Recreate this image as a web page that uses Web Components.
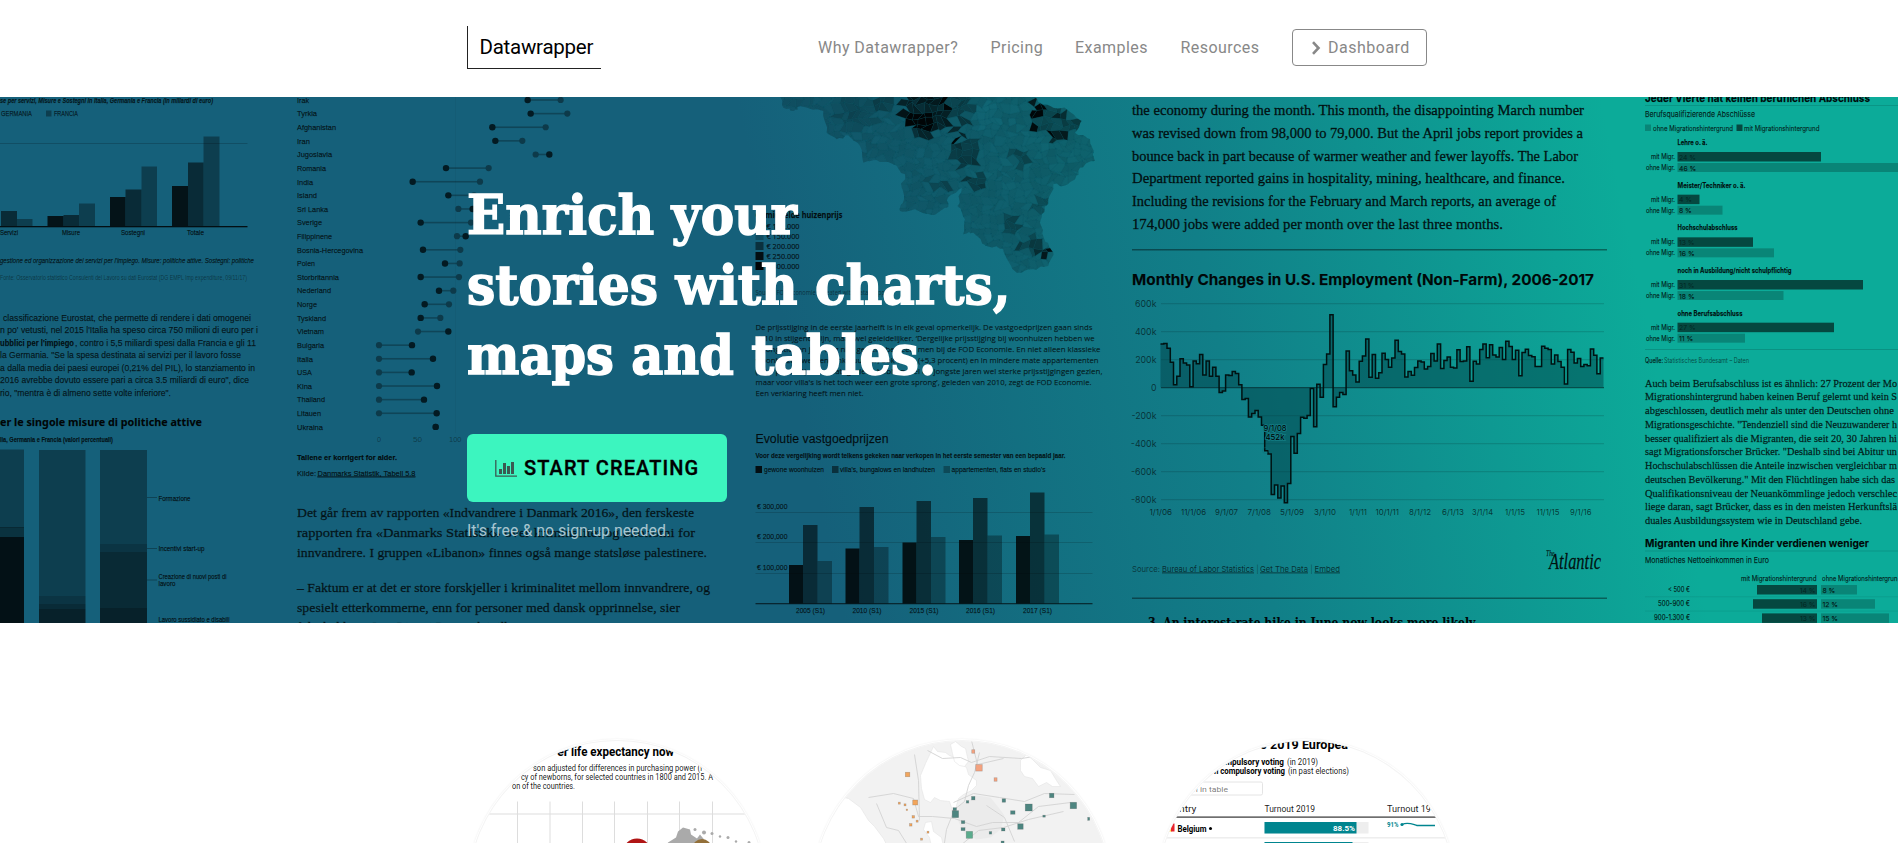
<!DOCTYPE html>
<html lang="en">
<head>
<meta charset="utf-8">
<title>Datawrapper</title>
<style>
html,body{margin:0;background:#fff;overflow:hidden;height:843px}
body{font-family:Roboto,"Liberation Sans",sans-serif;color:#000}
</style>
</head>
<body>
<dw-page>
  <dw-header>
    <dw-logo slot="brand">Datawrapper</dw-logo>
    <dw-nav-link w="140">Why Datawrapper?</dw-nav-link>
    <dw-nav-link w="52">Pricing</dw-nav-link>
    <dw-nav-link w="73">Examples</dw-nav-link>
    <dw-nav-link w="79">Resources</dw-nav-link>
    <dw-nav-button>Dashboard</dw-nav-button>
  </dw-header>
  <dw-hero>
    <dw-backdrop slot="backdrop"></dw-backdrop>
    <fit-line slot="title" w="330">Enrich your</fit-line>
    <fit-line slot="title" w="543">stories with charts,</fit-line>
    <fit-line slot="title" w="469">maps and tables.</fit-line>
    <dw-cta slot="action">START CREATING</dw-cta>
    <fit-line slot="note" w="203">It's free &amp; no sign-up needed.</fit-line>
  </dw-hero>
  <dw-features>
    <dw-bubble kind="chart"></dw-bubble>
    <dw-bubble kind="map"></dw-bubble>
    <dw-bubble kind="table"></dw-bubble>
  </dw-features>
</dw-page>
<script>
class Base extends HTMLElement{
  constructor(){super();this.attachShadow({mode:'open'});}
  connectedCallback(){this.shadowRoot.innerHTML=this.view();this.ready&&this.ready();}
}
customElements.define('dw-page',class extends Base{
  view(){return '<style>:host{display:flex;flex-direction:column;height:843px;overflow:hidden}</style><slot></slot>';}
});
customElements.define('dw-header',class extends Base{
  view(){return `<style>:host{display:block;height:97px;flex:none;background:#fff}
  .in{width:960px;margin:0 auto;height:95px;display:flex;align-items:center;justify-content:space-between;transform:translateX(-2px)}
  nav{display:flex;align-items:center;gap:32.5px}</style>
  <div class="in"><slot name="brand"></slot><nav><slot></slot></nav></div>`;}
});
customElements.define('dw-logo',class extends Base{
  view(){return `<style>:host{display:block;box-sizing:border-box;width:134px;height:43px;border-left:1px solid #222;border-bottom:1px solid #222;padding-left:11.500px;font:400 20.500px/42px Roboto,sans-serif;white-space:nowrap;letter-spacing:-.25px}</style><slot></slot>`;}
});
customElements.define('dw-nav-link',class extends Base{
  view(){return `<style>:host{display:block;width:${this.getAttribute('w')}px;font:400 16px/20px Roboto,sans-serif;letter-spacing:.45px;color:#888;white-space:nowrap;position:relative;left:-1px}</style><slot></slot>`;}
});
customElements.define('dw-nav-button',class extends Base{
  view(){return `<style>:host{display:flex;align-items:center;box-sizing:border-box;width:135px;height:37px;border:1px solid #888;border-radius:4px;padding-left:18px;gap:7px;font:400 16px/20px Roboto,sans-serif;letter-spacing:.5px;color:#888;margin-left:-1px}svg{display:block}</style>
  <svg width="10" height="14" viewBox="0 0 10 14"><path d="M2 1.200 7.500 7 2 12.800" fill="none" stroke="#888" stroke-width="2.600"/></svg><slot></slot>`;}
});
customElements.define('dw-hero',class extends Base{
  view(){return `<style>:host{display:block;position:relative;height:526px;flex:none;overflow:hidden;background:#15607a}
  .bg{position:absolute;inset:0}
  .in{position:relative;width:960px;margin:0 auto;left:-2px;padding-top:83px;box-sizing:border-box;display:flex;flex-direction:column;align-items:flex-start}
  h1{margin:0;font:700 55px/70px "DejaVu Serif",serif;color:#fff;-webkit-text-stroke:1.500px #fff}
  .note{margin-top:18px;font:400 17px/20px Roboto,sans-serif;color:#a9c6d0}
  .act{margin-top:44px}
  </style><div class="bg"><slot name="backdrop"></slot></div>
  <div class="in"><h1><slot name="title"></slot></h1><div class="act"><slot name="action"></slot></div><div class="note"><slot name="note"></slot></div></div>`;}
});
/* One line of text, stretched to a given width. Defined after the hero, whose font it measures with. */
customElements.define('fit-line',class extends Base{
  view(){return '<style>:host{display:block;white-space:nowrap}span{display:inline-block;transform-origin:0 50%}</style><span><slot></slot></span>';}
  ready(){const s=this.shadowRoot.querySelector('span'),w=+this.getAttribute('w');
    s.style.transform='scaleX('+(w/s.offsetWidth)+')';}
});
customElements.define('dw-cta',class extends Base{
  view(){return `<style>:host{display:flex;align-items:center;box-sizing:border-box;width:260px;height:68px;border-radius:6px;background:#3cf5bf;padding-left:28px;gap:7px;font:500 20px/24px Roboto,sans-serif;letter-spacing:1.100px;color:#000;-webkit-text-stroke:.35px #000;white-space:nowrap}svg{display:block;flex:none}</style>
  <svg width="22" height="18" viewBox="0 0 22 18"><path d="M.8 1v16.200H22" fill="none" stroke="#3a5a52" stroke-width="1.300"/><path d="M4 10h3v5H4zM8 4h3v11H8zM12 7h3v8h-3zM16 3h3v12h-3z" fill="#3a5a52"/></svg><slot></slot>`;}
});
customElements.define('dw-features',class extends Base{
  view(){return `<style>:host{display:grid;grid-template-columns:repeat(3,300px);column-gap:44.500px;padding:116px 0 0 467px;flex:none}</style><slot></slot>`;}
});

/* ---------- svg helpers ---------- */
const esc=s=>s.replace(/&/g,'&amp;').replace(/</g,'&lt;');
const F={s:'Liberation Sans, sans-serif',r:'Liberation Serif, serif',o:'Open Sans, sans-serif',n:'Noto Sans, sans-serif',l:'Roboto, sans-serif',i:'Inter, sans-serif',d:'DejaVu Serif, serif'};
function T(x,y,w,size,text,f='s',o=.8,extra=''){
  return `<text x="${x}" y="${y}" font-size="${size}" font-family="${F[f]}" fill-opacity="${o}" ${w?`textLength="${w}" lengthAdjust="spacingAndGlyphs"`:''} ${extra}>${esc(text)}</text>`;}
const R=(x,y,w,h,o,fill='#000')=>`<rect x="${x}" y="${y}" width="${w}" height="${h}" fill="${fill}" fill-opacity="${o}" stroke="none"/>`;
const B='font-weight="700"';

function italian(){
  let s=T(0,102.500,213,7.500,'se per servizi, Misure e Sostegni in Italia, Germania e Francia (in miliardi di euro)','s',.75,B+' font-style="italic"');
  s+=T(1,116,31,7.500,'GERMANIA','s',.7)+R(46,110.500,5.500,6,.35)+T(54,116,24,7.500,'FRANCIA','s',.7);
  s+=R(0,143,247.500,1,.18)+R(0,226,247.500,1.300,.85);
  for(const [x,y,w,o] of [[1,211,16,.55],[17,219,15.500,.35],[47.500,216,16,.8],[63.500,215,15.500,.55],[79,203.500,16,.35],[110,197,15.500,.8],[125.500,189.500,16,.55],[141.500,166.500,15.500,.35],[172,186,16,.8],[188,162.500,15.500,.55],[203.500,136.500,16,.35]])s+=R(x,y,w,226-y,o);
  s+=T(0,235,18,7,'Servizi')+T(62,235,18,7,'Misure')+T(121,235,24,7,'Sostegni')+T(187,235,17,7,'Totale');
  s+=T(0,262.500,254,7.500,'gestione ed organizzazione dei servizi per l\'impiego. Misure: politiche attive. Sostegni: politiche','s',.75,'font-style="italic"');
  s+=T(0,280,247,6.500,'Fonte: Osservatorio statistico Consulenti del Lavoro su dati Eurostat (DG EMPL lmp expenditure, 09/11/17)','s',.45,'stroke="none"');
  s+=T(3,320.500,248,9,'classificazione Eurostat, che permette di rendere i dati omogenei','s',.75)
    +T(0,333,258,9,'n po\' vetusti, nel 2015 l\'Italia ha speso circa 750 milioni di euro per i','s',.75)
    +T(0,345.500,74,9,'ubblici per l\'impiego','s',.85,B)+T(75,345.500,181,9,', contro i 5,5 miliardi spesi dalla Francia e gli 11','s',.75)
    +T(0,358,241,9,'la Germania. "Se la spesa destinata ai servizi per il lavoro fosse','s',.75)
    +T(0,370.500,255,9,'a dalla media dei paesi europei (0,21% del PIL), lo stanziamento in','s',.75)
    +T(0,383,249,9,'2016 avrebbe dovuto essere pari a circa 3.5 miliardi di euro", dice','s',.75)
    +T(0,395.500,171,9,'rio, "mentra è di almeno sette volte inferiore".','s',.75);
  s+=T(0,425.500,202,11,'er le singole misure di politiche attive','n',.95,B);
  s+=T(0,441.500,113,7,'lia, Germania e Francia (valori percentuali)','s',.8,B);
  s+=R(0,449.500,24,78,.35)+R(0,527,24,10,.48)+R(0,537,24,86,.82);
  s+=R(39,450,46.500,146,.35)+R(39,596,46.500,8,.45)+R(39,604,46.500,5,.55)+R(39,609,46.500,14,.65);
  s+=R(100,450,47,94,.35)+R(100,544,47,8,.45)+R(100,552,47,56,.56)+R(100,608,47,15,.65);
  for(const y of [497,548,579.500])s+=R(147,y,10,1,.3);
  s+=T(158.500,500.500,32,6.500,'Formazione')+T(158.500,550.500,46,6.500,'Incentivi start-up')+T(158.500,579,68,6.500,'Creazione di nuovi posti di')+T(158.500,586,17,6.500,'lavoro')+T(158.500,621.500,71,6.500,'Lavoro sussidiato e disabili');
  return s;
}
function norwegian(){
  const rows=[['Irak',12,743,842],['Tyrkia',20,752,862],['Afghanistan',39,637,797],['Iran',13,646,727],['Jugoslavia',35,808,767],['Romania',29,498,626],['India',16,398,600],['Island',20,505,582],['Sri Lanka',31,578,535],['Sverige',25,422,573],['Filippinene',35,557,531],['Bosnia-Hercegovina',66,429,541],['Polen',18,495,539],['Storbritannia',42,422,537],['Nederland',34,477,520],['Norge',20,434,507],['Tyskland',29,422,481],['Vietnam',27,505,414],['Bulgaria',27,396,297],['Italia',16,459,297],['USA',15,395,297],['Kina',15,471,297],['Thailand',28,432,297],['Litauen',24,470,297],['Ukraina',26,467,467]];
  let s=R(455,97,1,336,.04);
  rows.forEach(([n,w,a,b],i)=>{const y=100+i*13.620,xa=280+a/3,xb=280+b/3;
    s+=T(297,y+2.800,w,7.800,n,'s',.75)+R(Math.min(xa,xb),y-.8,Math.abs(xa-xb),1.600,.28)
      +`<circle cx="${xb}" cy="${y}" r="3.100" fill="#0d3a4a" stroke="none"/><circle cx="${xa}" cy="${y}" r="3.200" fill="#031a22" stroke="none"/>`;});
  s+=T(377,442,4,7.500,'0','s',.4,'stroke="none"')+T(413,442,9,7.500,'50','s',.4,'stroke="none"')+T(449,442,12.500,7.500,'100','s',.4,'stroke="none"');
  s+=T(297,459.500,100,8,'Tallene er korrigert for alder.','s',.9,B)+T(297,475.500,19,8,'Kilde:','s',.75)+T(317.500,475.500,98,8,'Danmarks Statistik, Tabell 5.8','s',.8,'text-decoration="underline"');
  const L=[[517,397,'Det går frem av rapporten «Indvandrere i Danmark 2016», den ferskeste'],[537,398,'rapporten fra «Danmarks Statistik» over kriminalitet og økonomi for'],[556.500,410,'innvandrere. I gruppen «Libanon» finnes også mange statsløse palestinere.'],[592,413,'– Faktum er at det er store forskjeller i kriminalitet mellom innvandrere, og'],[612,383,'spesielt etterkommerne, enn for personer med dansk opprinnelse, sier'],[631,230,'følgeholderen Jens Bjørn i Danmark i tilknyt']];
  for(const [y,w,t] of L)s+=T(297,y,w,13.500,t,'r',.75,'stroke-opacity=".5" stroke-width=".4"');
  return s;
}
function belgium(){
  const o=[[180,-5],[190,35],[220,45],[240,30],[310,45],[320,110],[350,130],[385,118],[420,150],[430,200],[470,192],[520,205],[555,235],[545,275],[552,310],[540,345],[585,340],[640,357],[680,335],[684,305],[725,275],[712,330],[735,370],[730,415],[760,410],[800,450],[850,460],[870,505],[890,530],[940,520],[985,510],[1000,470],[970,420],[960,380],[965,355],[985,310],[1000,265],[1030,270],[1065,250],[1080,215],[1125,195],[1110,130],[1065,110],[1085,75],[1040,40],[1000,35],[955,18],[930,-5]];
  let seed=7;const rnd=()=>(seed=(seed*16807)%2147483647)/2147483647;
  /* ragged coast: every edge gets small kinks */
  const pts=[];o.forEach(([x,y],i)=>{const [u,v]=o[(i+1)%o.length];for(let k=0;k<4;k++){const t=k/4,j=k?9:0;pts.push((720+(x+(u-x)*t+(rnd()-.5)*j)/3).toFixed(1)+' '+(96+(y+(v-y)*t+(rnd()-.5)*j)/3).toFixed(1));}});
  const p='M'+pts.join('L')+'Z';
  const G=6.500,NX=54,NY=29,pt=[];
  for(let j=0;j<=NY;j++){pt[j]=[];for(let i=0;i<=NX;i++)pt[j][i]=[774+i*G+(j%2)*G/2+(rnd()-.5)*6,92+j*G+(rnd()-.5)*6];}
  let cells='';
  const hot=[[925,105,26,.65],[920,122,13,.5],[958,104,14,.3],[960,120,7,.5],[958,136,7,.6],[966,153,14,.35],[1038,108,8,.65],[1057,134,8,.65],[1036,128,4,.6],[1068,122,10,.35],[1048,118,16,.25],[974,182,8,.35],[1044,251,8,.65],[1030,242,10,.3],[1018,157,9,.25],[1011,224,10,.25],[1040,205,9,.2],[935,186,9,.2],[855,112,20,.14],[884,103,10,.25]];
  for(let j=0;j<NY;j++)for(let i=0;i<NX;i++){
    const q=[pt[j][i],pt[j][i+1],pt[j+1][i+1],pt[j+1][i]],cx=q[0][0]+3,cy=q[0][1]+3;
    let a=.15+rnd()*.08;for(const [hx,hy,r,v] of hot){const d=Math.hypot(cx-hx,cy-hy);if(d<r)a+=v*(.65+rnd()*.35);}
    if(Math.hypot(cx-985,cy-115)<14)a*=.7;
    cells+=`<path d="M${q.map(v=>v[0].toFixed(1)+' '+v[1].toFixed(1)).join('L')}Z" fill-opacity="${Math.min(a,.95).toFixed(2)}"/>`;}
  let s=`<clipPath id="be"><path d="${p}"/></clipPath><g clip-path="url(#be)"><g stroke="#12606c" stroke-width=".3" stroke-opacity=".5">${cells}</g></g>`;
  s+=T(755.500,217.500,87,8,'Gemiddelde huizenprijs','n',.85,B);
  ['100.000','150.000','200.000','250.000','300.000'].forEach((v,i)=>{s+=R(755.500,222+i*10,8,8,[.1,.22,.5,.85,.97][i])+T(766.500,228.500+i*10,33,7.500,'€ '+v,'n',.75);});
  s+=T(755.500,295,135,7,'Source: FOD Economie - Created with Datawrapper','n',.5,'stroke="none"');
  [[329.500,'De prijsstijging in de eerste jaarhelft is in elk geval opmerkelijk. De vastgoedprijzen gaan sinds',337],[340.500,'2010 in stijgende lijn, maar wel geleidelijker. ‘Dergelijke prijsstijging bij woonhuizen hebben we',339],[351.500,'al jongstleden jaar nog niet gezien’, beweert men bij de FOD Economie. En niet alleen klassieke',345],[362.500,'woonhuizen werden flink duurder, ook villa\'s (+5,3 procent) en in mindere mate appartementen',343],[373.500,'(+2,1 procent). Deze categorieën hebben wel de jongste jaren wel sterke prijsstijgingen gezien,',347],[384.500,'maar voor villa\'s is het toch weer een grote sprong’, geleden van 2010, zegt de FOD Economie.',336],[395.500,'Een verklaring heeft men niet.',108]].forEach(([y,t,w])=>s+=T(755.500,y,w,8,t,'o',.68));
  s+=T(755.500,442.500,133,12.500,'Evolutie vastgoedprijzen','s',.85)+T(755.500,457.500,310,7.500,'Voor deze vergelijking wordt telkens gekeken naar verkopen in het eerste semester van een bepaald jaar.','s',.8,B);
  s+=R(755.500,466,6.500,7,.85)+T(764,472,60,7.500,'gewone woonhuizen')+R(832,466,6.500,7,.5)+T(840,472,95,7.500,'villa\'s, bungalows en landhuizen')+R(943.500,466,6.500,7,.3)+T(951.500,472,94,7.500,'appartementen, flats en studio\'s');
  [[512,'300,000'],[542,'200,000'],[573,'100,000']].forEach(([y,t])=>s+=R(755.500,y,337,1,.15)+T(757,y-3.500,30.500,7.500,'€ '+t,'s',.75));
  [[789,565,525,561,'2005 (S1)'],[845.500,548.500,507,547,'2010 (S1)'],[902.500,542.500,501,537,'2015 (S1)'],[959,540,498,535.500,'2016 (S1)'],[1016,536,492.500,534.500,'2017 (S1)']].forEach(([x,a,b,c,t])=>s+=R(x,a,14,603.500-a,.82)+R(x+14,b,14.500,603.500-b,.55)+R(x+28.500,c,14.500,603.500-c,.32)+T(x+7,612.500,29,7.500,t,'s',.75));
  return s+R(755.500,603,337,1.300,.6);
}
function atlantic(){
  let s='';
  [[115,452,'the economy during the month. This month, the disappointing March number'],[137.500,451,'was revised down from 98,000 to 79,000. But the April jobs report provides a'],[160.500,446,'bounce back in part because of warmer weather and fewer layoffs. The Labor'],[183,433,'Department reported gains in hospitality, mining, healthcare, and finance.'],[206,424,'Including the revisions for the February and March reports, an average of'],[228.500,371,'174,000 jobs were added per month over the last three months.']].forEach(([y,w,t])=>s+=T(1132,y,w,14.500,t,'r',.85,'stroke-opacity=".7" stroke-width=".4"'));
  s+=R(1132,249,475,1.500,.4)+R(1132,597.500,475,1.500,.4);
  s+=T(1132,285,462,15,'Monthly Changes in U.S. Employment (Non-Farm), 2006-2017','i',.95,B);
  ['600k','400k','200k','0','-200k','-400k','-600k','-800k'].forEach((t,i)=>{const y=303.700+i*28;s+=R(1161,y-.5,443,1,i==3?.6:.16)+T(1156.500,y+3.300,0,8.800,t,'i',.6,'text-anchor="end" stroke="none"');});
  const v=[310,315,280,180,20,80,205,175,160,5,190,170,235,90,190,80,145,80,-35,-25,90,85,115,100,20,-85,-78,-210,-185,-165,-210,-270,-452,-474,-765,-697,-790,-703,-823,-686,-351,-470,-329,-212,-219,-200,-7,-280,23,-70,165,240,520,-137,-70,-35,-50,260,120,90,40,188,225,346,73,235,66,106,245,200,145,210,338,257,240,75,115,87,143,190,183,132,149,243,190,311,135,192,218,144,140,269,185,189,291,45,187,168,272,310,213,306,232,218,286,200,331,292,201,266,84,251,273,228,220,150,149,295,280,271,168,233,186,144,24,271,252,176,208,150,164,155,276,230,98,211];
  let d='';v.forEach((n,i)=>{const x=1160.500+i*3.257,y=(387.500-n*.14).toFixed(1);d+=`${i?'V':'M'+x+' '}${y}H${(x+3.257).toFixed(1)}`;});
  s+=`<path d="${d}V387.500H1160.500Z" fill="#004048" fill-opacity=".48" stroke="none"/><path d="${d}" fill="none" stroke="#001212" stroke-width="1.500" stroke-opacity="1"/>`;
  s+=`<circle cx="1265.500" cy="450.500" r="3" fill="none" stroke="#0f7077" stroke-width=".8"/><g stroke="#11787f" stroke-width="2" stroke-opacity="1" paint-order="stroke">`+T(1263.500,430.500,23,8.200,'9/1/08','i',1)+T(1265.500,440,19,8.200,'452k','i',1)+'</g>';
  [[1149.500,22.500,'1/1/06'],[1181,25,'11/1/06'],[1215,23,'9/1/07'],[1247.500,23.500,'7/1/08'],[1280,24,'5/1/09'],[1314,22,'3/1/10'],[1349,18,'1/1/11'],[1375.500,23.500,'10/1/11'],[1409,22,'8/1/12'],[1442,22,'6/1/13'],[1472,21,'3/1/14'],[1505,20,'1/1/15'],[1536.500,23,'11/1/15'],[1570,21.500,'9/1/16']].forEach(([x,w,t])=>s+=T(x,514.500,w,8.200,t,'i',.65,'stroke="none"'));
  s+='<g stroke="none">'+T(1132,571.500,28,8.200,'Source:','i',.55)+T(1162,571.500,92,8.200,'Bureau of Labor Statistics','i',.65,'text-decoration="underline"')+T(1256.500,571.500,2,8,'|','i',.5)+T(1260,571.500,48,8.200,'Get The Data','i',.65,'text-decoration="underline"')+T(1310.500,571.500,2,8,'|','i',.5)+T(1314.500,571.500,25.500,8.200,'Embed','i',.65,'text-decoration="underline"')+'</g>';
  s+=T(1546,555.500,8.500,7.500,'The','r',.85,'font-style="italic"')+T(1549,568.500,52,23,'Atlantic','r',.88,'font-style="italic" stroke-opacity=".6" stroke-width=".4"');
  s+=T(1148,626.500,330,13.500,'3.  An interest-rate hike in June now looks more likely.','d',.95,B);
  return s;
}
function german(){
  let s=T(1645,101.500,225,11,'Jeder Vierte hat keinen beruflichen Abschluss','i',.95,B)+R(1645,105,253,1,.12);
  s+=T(1645,116.500,110,8,'Berufsqualifizierende Abschlüsse','i',.78)+R(1645,124.500,6,6.500,.22)+T(1653,130.500,80,7.200,'ohne Migrationshintergrund','i',.75)+R(1736.500,124.500,6,6.500,.58)+T(1744,130.500,75.500,7.200,'mit Migrationshintergrund','i',.75);
  [['Lehre o. ä.',30,'24 %',143.500,'46 %',222],['Meister/Techniker o. ä.',68,'4 %',22,'8 %',45],['Hochschulabschluss',60,'13 %',75.500,'16 %',96.500],['noch in Ausbildung/nicht schulpflichtig',114,'31 %',185.500,'18 %',106],['ohne Berufsabschluss',65,'27 %',156.500,'11 %',67.500]].forEach(([h,hw,a,aw,b,bw],i)=>{const y=i*42.670;
    s+=T(1677.500,145+y,hw,7.200,h,'i',.9,B)+R(1677.500,152+y,aw,9.500,.58)+R(1677.500,163+y,bw,9,.22)
    +T(1651,159+y,24,7,'mit Migr.','i',.8)+T(1646,170+y,29,7,'ohne Migr.','i',.8)+T(1679,159.500+y,0,6.800,a,'i',.5,'stroke="none"')+T(1679,170.500+y,0,6.800,b,'i',.75);});
  s+=R(1645,349,253,1,.14)+T(1645,363,18,7,'Quelle:','i',.85)+T(1664,363,85,7,'Statistisches Bundesamt – Daten','i',.6,'stroke="none"');
  ['Auch beim Berufsabschluss ist es ähnlich:  27 Prozent der Mo','Migrationshintergrund haben keinen Beruf gelernt und kein S','abgeschlossen, deutlich mehr als unter den Deutschen ohne','Migrationsgeschichte. "Tendenziell sind die Neuzuwanderer h','besser qualifiziert als die Migranten, die seit 20, 30 Jahren hi','sagt Migrationsforscher Brücker. "Deshalb sind bei Abitur un','Hochschulabschlüssen die Anteile inzwischen vergleichbar m','deutschen Bevölkerung." Mit den Flüchtlingen habe sich das','Qualifikationsniveau der Neuankömmlinge jedoch verschlec','liege daran, sagt Brücker, dass es in den meisten Herkunftslä','duales Ausbildungssystem wie in Deutschland gebe.'].forEach((t,i)=>s+=T(1645,386.500+i*13.770,[252,252,249,252,252,252,252,250,252,252,217][i],9.800,t,'r',.8,'stroke-opacity=".5" stroke-width=".35"'));
  s+=T(1645,546.500,224,10.500,'Migranten und ihre Kinder verdienen weniger','i',.95,B)+R(1645,550.500,253,1,.12)+T(1645,562.500,124,8,'Monatliches Nettoeinkommen in Euro','i',.8);
  s+=T(1741,580.500,75.500,7.200,'mit Migrationshintergrund','i',.8)+T(1822,580.500,75.500,7.200,'ohne Migrationshintergrun','i',.8);
  [['< 500 €',22,1757,'14 %','8 %',36],['500-900 €',32,1753,'16 %','12 %',54],['900-1.300 €',36,1762,'13 %','15 %',68]].forEach(([l,lw,x,a,b,w],i)=>{const y=i*14.200;
    s+=T(1690-lw,591.500+y,lw,7.200,l,'i',.85)+R(x,585+y,1817-x,9.500,.58)+R(1821,585+y,w,9.500,.22)+T(1815.500,592.500+y,0,6.800,a,'i',.5,'text-anchor="end" stroke="none"')+T(1822.500,592.500+y,0,6.800,b,'i',.75)+R(1645,596.500+y,253,.7,.1);});
  return s;
}
customElements.define('dw-backdrop',class extends Base{
  view(){return `<style>:host{display:block;width:100%;height:100%}svg{display:block}</style>
  <svg width="1898" height="526" viewBox="0 97 1898 526"><defs><linearGradient id="g" gradientUnits="userSpaceOnUse" x1="790" y1="360" x2="1620" y2="190"><stop offset="0" stop-color="#15607a"/><stop offset=".5" stop-color="#117f88"/><stop offset="1" stop-color="#0cab99"/></linearGradient></defs>
  <rect y="97" width="1898" height="526" fill="url(#g)"/><g stroke="#000" stroke-width=".25" stroke-opacity=".5">${italian()}${norwegian()}${belgium()}${atlantic()}${german()}</g></svg>`;}
});

/* ---------- feature bubbles ---------- */
const bubble={
chart(){
  let s=T(557,755,11.500,12,'er','l',1,B)+T(571,755,103,12,'life expectancy now','l',1,B);
  s+=T(533,770,169,8.500,'son adjusted for differences in purchasing power (i','l',.9)+T(521,779,192,8.500,'cy of newborns, for selected countries in 1800 and 2015. A','l',.9)+T(512,788,63,8.500,'on of the countries.','l',.9);
  for(const x of [517,549.500,582,614,647,679,712])s+=R(x,801,1,45,1,'#ddd');
  s+=R(470,813,300,1,1,'#ddd');
  s+='<g fill="#aaa"><path d="M664 850l4-8 8-5 2-6 5-4 7 2 1 5 6 4 3-4 5 6 3 10z"/><circle cx="695" cy="829" r="1.500"/><circle cx="704" cy="832" r="2"/><circle cx="712" cy="833" r="1.500"/><circle cx="720" cy="836" r="1.200"/><circle cx="728" cy="837" r="1.500"/><circle cx="736" cy="841" r="1.200"/><circle cx="749" cy="842" r="1.500"/></g><circle cx="637" cy="852" r="14" fill="#b01515"/><circle cx="702" cy="848" r="9.500" fill="#93703a"/>';
  return s;},
map(){
  let s=R(811,739,300,120,1,'#f2f2f2');
  s+='<g fill="#fff" stroke="#e4e4e4" stroke-width=".6"><path d="M811 790l37 8 12 9 8 13 6 6 9 12 6 12h-90z"/><path d="M925 763l-5 12 1 13 3 11 6 3 4-5 6 3 9 1 3 9 2 6 3-2-1-9 2-7 5-4 8-4 5-5 0-5-8-6-2-7-6-4-6-6-5-2-4-3-8-1-4-5z" /><path d="M950 744l5-3 6 5 4 2 3 13-4 5-5-1-5-4-2-8z"/><path d="M1020 760l6-6 6 5 8 8 10 3 6 10 4 6-8 0-6-4-8 4-6-8-8-2-4-6z"/><path d="M958 805l8-4 10-6 14 2 8 10 6 8-4 14-10 8-14 2-12-6-6-12z" fill="#ebebeb" stroke="none"/><path d="M925 822l6-1 2 10 8 6 2 9h-12l-2-9-6-8z"/></g>';
  s+='<g fill="none" stroke="#d3d3d3" stroke-width=".9"><path d="M914 754l4 26 1 40M927 750l15 8 18-1 11 5 18-6 32 2 19-3"/><path d="M979 752l-5 20-6 13-4 16-10 8-8 20-3 20"/><path d="M868 797l25-4 20 5 5 18 14 0 22 2 22 8 16-4 26 0 20-16 32-4"/><path d="M953 802l20-9 26 4 25 4 20-8 30 1"/><path d="M960 845l18-15 25-3 25-8 35-8"/><path d="M876 803l10 24 12 3 10 16M971 740l6 24 26-6M986 805l18 12 10 24"/></g>';
  const q=(px,py,w,h,c)=>`<rect x="${460+px/1.568-w/2}" y="${725+py/3-h/2}" width="${w}" height="${h}" fill="${c}" stroke="#555" stroke-opacity=".35" stroke-width=".6"/>`;
  for(const [x,y,w] of [[701,147,4.500],[713,231,5],[688,233,2],[697,238,2],[700,253,1.500],[710,274,2.500],[716,287,2],[706,298,2.500],[733,320,2],[723,341,2]])s+=q(x,y,w,w,'#f2a55c');
  for(const [x,y,w,h] of [[804,78,3,3.500],[813,127,6.500,6.500],[839,162,3,3.500]])s+=q(x,y,w,h,'#f3a27f');
  for(const [x,y,w,h] of [[927,210,4.500,4.500],[961,240,6.500,6.500],[891,246,7,7],[852,225,3.500,3.500],[804,218,3.500,3.500],[795,229,2.500,2.500],[775,251,3.500,3],[776,266,6.500,7],[866,261,4.500,3.500],[915,272,2.500,2],[878,303,5.500,5.500],[851,312,3.500,3],[831,322,2.500,2.500],[788,290,3.500,3],[788,311,4,3],[985,280,2,3],[850,351,3,3]])s+=q(x,y,w,h,'#4d8580');
  return s+q(798,328,6.500,7,'#5aab8c');},
table(){
  const c='#00858f';
  let s=T(1260,748,88,12,'e 2019 Europea','l',1,B)+T(1225,764,59,8.500,'mpulsory voting','l',1,B)+T(1287,764,31,8.500,'(in 2019)','l',.9)+T(1214,773,71,8.500,'n compulsory voting','l',1,B)+T(1288,773,61,8.500,'(in past elections)','l',.9);
  s+='<rect x="1165" y="781.500" width="97.500" height="13" rx="1.500" fill="#fff" stroke="#ddd" stroke-width=".8"/>'+T(1193,791,35,8,'n in table','l',.55);
  s+=T(1179,811,17.500,9,'ntry','l',.9)+T(1264.500,811,50.500,9,'Turnout 2019','l',.9)+T(1387,811,44,9,'Turnout 19','l',.9)+R(1157,816,300,1.200,1,'#333');
  s+='<path d="M1168 823h4v8h-4z" fill="#ffd33c"/><path d="M1171 823h3.500v8h-3.500z" fill="#e8212d"/>'+T(1177.500,831,29,8.500,'Belgium','l',1,B)+'<circle cx="1210.500" cy="828" r="1.500"/>';
  s+=R(1264.500,821.500,104,11.500,1,'#eee')+R(1264.500,821.500,92,11.500,1,c)+`<text x="1355" y="830" font-size="8" font-family="Roboto,sans-serif" font-weight="700" fill="#fff" text-anchor="end">88.5%</text><text x="1387" y="826" font-size="7.500" font-family="Roboto,sans-serif" font-weight="700" fill="${c}" textLength="11.500" lengthAdjust="spacingAndGlyphs">91%</text>`;
  s+=`<path d="M1402 824c6-3 11 0 15 1h18" fill="none" stroke="${c}" stroke-width="1.300"/><circle cx="1402" cy="824" r="1.600" fill="${c}"/>`;
  s+=R(1157,837,300,.8,1,'#ddd')+R(1264.500,841.500,104,10,1,'#eee')+R(1264.500,841.500,88,10,1,c)+`<text x="1387" y="847" font-size="7.500" font-family="Roboto,sans-serif" font-weight="700" fill="${c}">88%</text>`;
  return s;}
};
customElements.define('dw-bubble',class extends Base{
  view(){const k=this.getAttribute('kind'),x={chart:467,map:811.500,table:1156}[k];
  return `<style>:host{display:block;box-sizing:border-box;width:300px;height:300px;border-radius:50%;border:2px solid #fff;box-shadow:0 0 2px #ececec;background:#fff}
  div{width:296px;height:296px;border-radius:50%;overflow:hidden;box-shadow:0 0 0 1px #f4f4f4}svg{display:block}</style>
  <div><svg width="296" height="296" viewBox="${x+2} 740.500 296 296">${bubble[k]()}</svg></div>`;}
});
</script>
</body>
</html>
